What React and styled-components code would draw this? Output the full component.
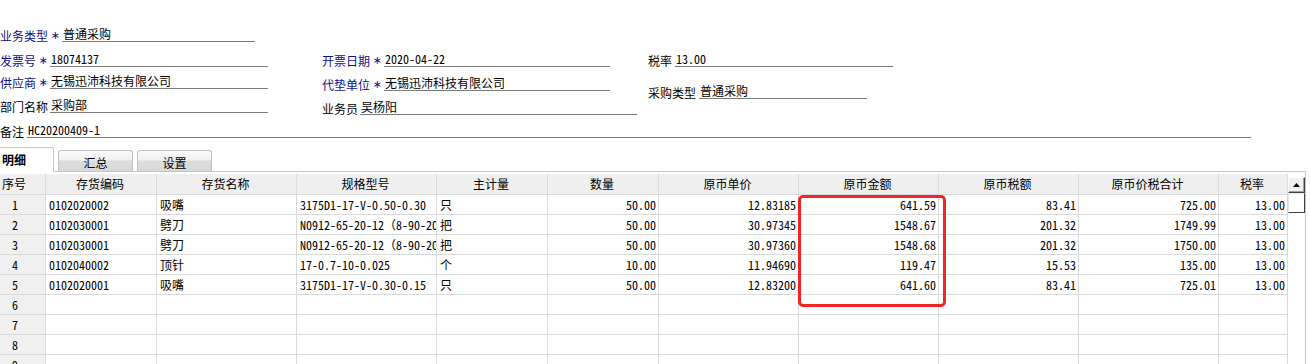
import React from "react";
import styled, { createGlobalStyle } from "styled-components";

const GlobalStyle = createGlobalStyle`
  html, body {
    margin: 0;
    padding: 0;
    background: #fff;
  }
  body {
    width: 1310px;
    height: 364px;
    overflow: hidden;
    font-family: "Noto Sans Mono CJK SC", "Noto Sans CJK SC", "DejaVu Sans Mono", monospace;
    font-size: 12px;
    color: #000;
  }
`;

const columns = [
  { key: "no", title: "序号", w: 46, align: "left" },
  { key: "code", title: "存货编码", w: 111, align: "left" },
  { key: "name", title: "存货名称", w: 140, align: "left" },
  { key: "spec", title: "规格型号", w: 140, align: "left" },
  { key: "unit", title: "主计量", w: 111, align: "left" },
  { key: "qty", title: "数量", w: 111, align: "right" },
  { key: "price", title: "原币单价", w: 140, align: "right" },
  { key: "amount", title: "原币金额", w: 140, align: "right" },
  { key: "tax", title: "原币税额", w: 140, align: "right" },
  { key: "total", title: "原币价税合计", w: 140, align: "right" },
  { key: "rate", title: "税率", w: 69, align: "right" },
];

const rows = [
  { code: "0102020002", name: "吸嘴", spec: "3175D1-17-V-0.50-0.30", unit: "只", qty: "50.00", price: "12.83185", amount: "641.59", tax: "83.41", total: "725.00", rate: "13.00" },
  { code: "0102030001", name: "劈刀", spec: "N0912-65-20-12（8-90-20）", unit: "把", qty: "50.00", price: "30.97345", amount: "1548.67", tax: "201.32", total: "1749.99", rate: "13.00" },
  { code: "0102030001", name: "劈刀", spec: "N0912-65-20-12（8-90-20）", unit: "把", qty: "50.00", price: "30.97360", amount: "1548.68", tax: "201.32", total: "1750.00", rate: "13.00" },
  { code: "0102040002", name: "顶针", spec: "17-0.7-10-0.025", unit: "个", qty: "10.00", price: "11.94690", amount: "119.47", tax: "15.53", total: "135.00", rate: "13.00" },
  { code: "0102020001", name: "吸嘴", spec: "3175D1-17-V-0.30-0.15", unit: "只", qty: "50.00", price: "12.83200", amount: "641.60", tax: "83.41", total: "725.01", rate: "13.00" },
  {}, {}, {}, {},
];

function Field({ label, value, required, h, lw, vw }) {
  return (
    <FieldRow $h={h}>
      <Label $w={lw} $required={required}>
        {label}
        {required && <Star>∗</Star>}
      </Label>
      <Value $w={vw}>{value}</Value>
    </FieldRow>
  );
}

export default function App() {
  return (
    <Page>
      <GlobalStyle />
      <Form>
        <Field label="业务类型" value="普通采购" required h={24} lw={62} vw={193} />
        <FieldColumns>
          <FieldColumn $w={322}>
            <Field label="发票号" value="18074137" required h={25} lw={50} vw={218} />
            <Field label="供应商" value="无锡迅沛科技有限公司" required h={22} lw={50} vw={218} />
            <Field label="部门名称" value="采购部" h={24} lw={50} vw={218} />
          </FieldColumn>
          <FieldColumn $w={326}>
            <Field label="开票日期" value="2020-04-22" required h={25} lw={62} vw={226} />
            <Field label="代垫单位" value="无锡迅沛科技有限公司" required h={24} lw={62} vw={226} />
            <Field label="业务员" value="吴杨阳" h={24} lw={38} vw={277} />
          </FieldColumn>
          <FieldColumn $w={400}>
            <Field label="税率" value="13.00" h={25} lw={27} vw={218} />
            <Field label="采购类型" value="普通采购" h={32} lw={51} vw={168} />
          </FieldColumn>
        </FieldColumns>
        <Field label="备注" value="HC20200409-1" h={23} lw={27} vw={1224} />
      </Form>

      <TabStrip>
        <ActiveTab>明细</ActiveTab>
        <Tab>汇总</Tab>
        <Tab>设置</Tab>
      </TabStrip>

      <GridFrame>
        <Table $cols={columns.map((c) => c.w + "px").join(" ")}>
          {columns.map((c) => (
            <HeadCell key={c.key} $left={c.key === "no"}>
              {c.title}
            </HeadCell>
          ))}
          {rows.map((r, i) =>
            columns.map((c) =>
              c.key === "no" ? (
                <NumCell key={i + c.key}>{i + 1}</NumCell>
              ) : (
                <Cell key={i + c.key} $align={c.align}>
                  {r[c.key] || ""}
                </Cell>
              )
            )
          )}
        </Table>
        <ScrollBar>
          <ScrollUp>
            <svg width="7" height="4" viewBox="0 0 7 4">
              <polygon points="0,4 7,4 3.5,0" fill="#000" />
            </svg>
          </ScrollUp>
          <ScrollThumb />
        </ScrollBar>
        <Highlight />
      </GridFrame>
    </Page>
  );
}

const Page = styled.div`
  width: 1310px;
  height: 364px;
  overflow: hidden;
  padding-top: 18px;
  box-sizing: border-box;
`;

const Form = styled.div`
  display: flex;
  flex-direction: column;
`;

const FieldColumns = styled.div`
  display: flex;
  align-items: flex-start;
`;

const FieldColumn = styled.div`
  display: flex;
  flex-direction: column;
  width: ${(p) => p.$w}px;
  flex-shrink: 0;
`;

const FieldRow = styled.div`
  display: flex;
  align-items: flex-end;
  height: ${(p) => p.$h}px;
`;

const Label = styled.div`
  display: flex;
  align-items: center;
  width: ${(p) => p.$w}px;
  flex-shrink: 0;
  line-height: 14px;
  margin-bottom: -1px;
  color: ${(p) => (p.$required ? "#10108c" : "#000")};
  white-space: nowrap;
`;

const Star = styled.span`
  margin-left: auto;
  margin-right: 2px;
  font-family: "DejaVu Sans", sans-serif;
  font-size: 11px;
  line-height: 14px;
`;

const Value = styled.div`
  width: ${(p) => p.$w}px;
  flex-shrink: 0;
  box-sizing: border-box;
  border-bottom: 1px solid #7a7a7a;
  line-height: 13px;
  padding: 0 0 1px 1px;
  white-space: nowrap;
`;

const TabStrip = styled.div`
  display: flex;
  align-items: flex-end;
  height: 25px;
  margin-top: 8px;
  width: 1306px;
  border-bottom: 1px solid #c4c4c4;
`;

const ActiveTab = styled.div`
  width: 54px;
  height: 25px;
  box-sizing: border-box;
  margin-bottom: -1px;
  border: 1px solid #c4c4c4;
  border-left: none;
  border-bottom: 1px solid #fff;
  border-top-right-radius: 3px;
  background: #fff;
  font-weight: bold;
  line-height: 23px;
  padding-left: 2px;
`;

const Tab = styled.div`
  width: 75px;
  height: 21px;
  box-sizing: border-box;
  margin-left: 4px;
  border: 1px solid #c0c0c0;
  border-bottom: none;
  border-radius: 3px 3px 0 0;
  background: linear-gradient(#fafafa 0%, #f0f0f0 45%, #dddddd 50%, #d8d8d8 100%);
  text-align: center;
  line-height: 23px;
`;

const GridFrame = styled.div`
  position: relative;
  display: flex;
  align-items: flex-start;
  width: 1306px;
  box-sizing: border-box;
  border-right: 1px solid #c8c8c8;
  padding-top: 2px;
`;

const Table = styled.div`
  display: grid;
  grid-template-columns: ${(p) => p.$cols};
  flex-shrink: 0;
`;

const Cell = styled.div`
  height: 20px;
  box-sizing: border-box;
  border-right: 1px solid #dadada;
  border-bottom: 1px solid #dadada;
  padding: 0 2px 0 3px;
  line-height: 19px;
  overflow: hidden;
  white-space: nowrap;
  text-align: ${(p) => p.$align};
`;

const HeadCell = styled(Cell)`
  height: 21px;
  line-height: 20px;
  background: #efefef;
  text-align: ${(p) => (p.$left ? "left" : "center")};
  padding-left: ${(p) => (p.$left ? "2px" : "0")};
`;

const NumCell = styled(Cell)`
  background: #f0f0f0;
  padding-left: 12px;
`;

const ScrollBar = styled.div`
  display: flex;
  flex-direction: column;
  width: 17px;
  padding-top: 3px;
`;

const ScrollUp = styled.div`
  display: flex;
  align-items: center;
  justify-content: center;
  height: 16px;
  box-sizing: border-box;
  background: #f0f0f0;
  border-top: 1px solid #fff;
  border-left: 1px solid #fff;
  border-right: 1px solid #404040;
  border-bottom: 1px solid #404040;
  box-shadow: inset -1px -1px 0 #a0a0a0;
`;

const ScrollThumb = styled.div`
  height: 20px;
  box-sizing: border-box;
  background: #fff;
  border-top: 1px solid #e8e8e8;
  border-left: 1px solid #e8e8e8;
  border-right: 1px solid #404040;
  border-bottom: 1px solid #404040;
`;

const Highlight = styled.div`
  position: absolute;
  left: 798px;
  top: 23px;
  width: 148px;
  height: 112px;
  box-sizing: border-box;
  border: 3px solid #f22424;
  border-radius: 5px;
  pointer-events: none;
`;
